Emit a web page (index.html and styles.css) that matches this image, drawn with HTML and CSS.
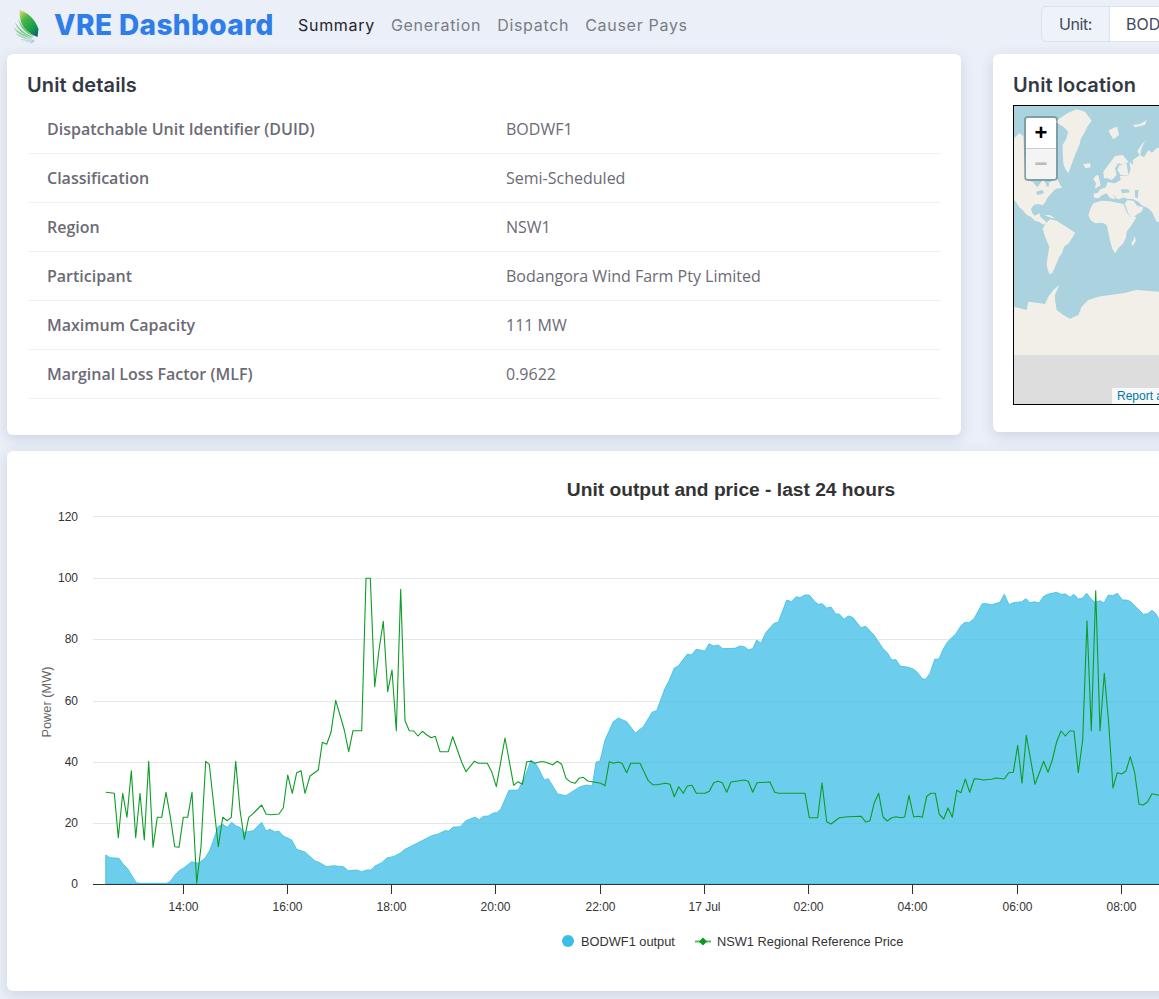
FILE: index.html
```html
<!DOCTYPE html>
<html lang="en">
<head>
<meta charset="utf-8">
<title>VRE Dashboard</title>
<link rel="stylesheet" href="styles.css">
</head>
<body>
<header class="topbar">
  <a class="brand" href="#">
    <svg class="logo" viewBox="12 8 30 36" width="30" height="36" aria-hidden="true">
      <defs>
        <linearGradient id="leaf" x1="0.1" y1="0" x2="0.8" y2="1">
          <stop offset="0" stop-color="#d6dc6c"/>
          <stop offset="0.3" stop-color="#4fb748"/>
          <stop offset="0.75" stop-color="#129a4c"/>
          <stop offset="1" stop-color="#14606f"/>
        </linearGradient>
      </defs>
      <path d="M20.500 9C28 11 36 18 39.500 28L38.500 36C31 33 24.500 28 22 21C21 17 20.500 12 20.500 9Z" fill="url(#leaf)"/>
      <path d="M19 17C21 23 27 30 36 35.500C27 33 21 27 19 17Z" fill="#6cc16a"/>
      <path d="M16 21.500C20 27 26 33 35 36.500C26 35.500 19 30 16 21.500Z" fill="#7fcb8a"/>
      <path d="M14.500 26.500C20 31 27 35 34.500 37C26 37 18 33 14.500 26.500Z" fill="#8dd0a0"/>
      <path d="M16.500 32C22 35 28 37 34 37.800C28 38.800 20 37 16.500 32Z" fill="#a6d8ba"/>
      <path d="M21.500 38C26 38.500 30 38.500 34 38.300C31 40.300 25 40.800 21.500 38Z" fill="#bcdcd2"/>
      <path d="M26 41.500C28 40.500 32 39 34.800 38.500C33 40.500 29 42 26 41.500Z" fill="#c3cfe0"/>
      <path d="M31 42.500C32 41 33.500 39.500 35.500 38.600C35.500 40.500 34 42 31 42.500Z" fill="#a9b9d4"/>
    </svg>
    <span class="brand-name">VRE Dashboard</span>
  </a>
  <nav class="nav">
    <a class="nav-link active" href="#">Summary</a>
    <a class="nav-link" href="#">Generation</a>
    <a class="nav-link" href="#">Dispatch</a>
    <a class="nav-link" href="#">Causer Pays</a>
  </nav>
  <div class="unit-group">
    <span class="unit-label">Unit:</span>
    <span class="unit-value">BODWF1</span>
  </div>
</header>

<main class="page">
  <div class="cards-row">
    <section class="card card-details">
      <h2 class="card-title">Unit details</h2>
      <table class="details">
        <tbody>
          <tr><th>Dispatchable Unit Identifier (DUID)</th><td>BODWF1</td></tr>
          <tr><th>Classification</th><td>Semi-Scheduled</td></tr>
          <tr><th>Region</th><td>NSW1</td></tr>
          <tr><th>Participant</th><td>Bodangora Wind Farm Pty Limited</td></tr>
          <tr><th>Maximum Capacity</th><td>111 MW</td></tr>
          <tr><th>Marginal Loss Factor (MLF)</th><td>0.9622</td></tr>
        </tbody>
      </table>
    </section>

    <section class="card card-map">
      <h2 class="card-title">Unit location</h2>
      <div class="map">
        <svg class="map-world" viewBox="42 18 1200 894" aria-hidden="true">
          <rect class="sea" x="0" y="0" width="1300" height="765"/>
          <g class="land">
            <path d="M42 115L58 100L70 108L76 240L98 245L112 262L128 240L140 252L150 246L172 236L180 254L187 263L168 266L158 276L142 294L136 306L128 316L114 312L102 315L93 325L97 340L105 347L118 340L122 352L130 358L141 368L130 374L118 366L105 362L92 350L80 345L68 330L58 322L50 308L42 300Z"/>
            <path d="M132 346L150 345L167 356L150 352Z"/>
            <path d="M190 48L205 38L230 28L255 35L275 62L262 80L255 95L243 115L238 135L225 165L214 195L205 220L195 205L190 190L188 160L188 135L198 118L205 95L190 80L165 65Z"/>
            <path d="M250 192L270 190L272 202L256 205Z"/>
            <path d="M325 92L338 85L352 80L357 105L340 118L332 105Z"/>
            <path d="M398 75L420 72L440 60L435 75L405 82Z"/>
            <path d="M412 152L428 130L445 116L432 128L424 148L420 168Z"/>
            <path d="M280 238L288 226L295 226L302 256L285 266L288 250Z"/>
            <path d="M312 235L310 215L325 195L345 168L368 165L385 185L372 195L355 190L345 205L350 225L335 240L322 235Z"/>
            <path d="M358 196L380 192L385 225L362 225L352 210Z"/>
            <path d="M282 293L281 281L293 279L301 268L318 262L322 247L345 250L362 240L360 228L385 226L392 208L388 186L400 194L398 180L420 165L432 172L445 150L456 158L470 145L492 140L1300 130L1300 365L470 365L456 336L444 325L425 316L415 305L400 298L380 296L372 292L358 298L350 296L340 283L346 298L330 294L320 280L306 285L296 295Z"/>
            <path d="M374 311L382 300L400 302L412 318L430 322L425 335L412 342L395 356L387 345Z"/>
            <path d="M128 386L138 370L150 358L170 362L185 372L205 385L225 398L218 412L206 430L192 440L186 460L178 470L170 490L158 518L148 523L142 505L140 490L148 440L135 410Z"/>
            <path d="M265 345L272 325L280 310L305 302L330 304L370 312L380 335L390 352L410 350L395 375L380 395L378 412L370 430L355 445L345 460L336 445L330 420L320 375L308 368L285 370L272 360Z"/>
            <path d="M394 432L405 408L407 424L398 438Z"/>
            <path d="M42 620L60 625L80 630L85 605L110 608L135 612L145 590L160 570L178 555L165 585L165 600L170 630L190 645L210 656L235 645L245 620L265 600L295 590L330 585L370 580L410 570L480 575L1300 575L1300 765L42 765Z"/>
          </g>
          <path class="sea" d="M405 270L416 270L413 296L405 290Z"/>
          <path class="sea" d="M362 268L385 268L390 277L366 280Z"/>
          <path class="sea" d="M138 250L146 248L148 258L140 260Z"/>
          <path class="sea" d="M108 275L128 270L132 280L112 285Z"/>
          <rect class="map-void" x="0" y="765" width="1300" height="160"/>
        </svg>
        <div class="zoom-control">
          <span class="zoom-btn zoom-in">+</span>
          <span class="zoom-btn zoom-out">−</span>
        </div>
        <a class="attribution" href="#">Report a map error</a>
      </div>
    </section>
  </div>

  <section class="card card-chart">
    <svg class="chart" viewBox="7 451 1486 540" role="img">
      <text class="chart-title" x="731" y="495.500">Unit output and price - last 24 hours</text>
      <g class="grid">
        <path d="M93 516.500H1493M93 578.500H1493M93 639.500H1493M93 701.500H1493M93 762.500H1493M93 823.500H1493"/>
      </g>
      <g class="ylabels">
        <text x="78" y="521">120</text>
        <text x="78" y="582">100</text>
        <text x="78" y="643">80</text>
        <text x="78" y="705">60</text>
        <text x="78" y="766">40</text>
        <text x="78" y="827">20</text>
        <text x="78" y="888">0</text>
      </g>
      <text class="ytitle" transform="translate(51 702) rotate(-90)">Power (MW)</text>
      <path class="area" d="M105.700 884L105.700 855L110 857.700L119 858.300L123.300 864.300L127.700 868.700L136.300 882.700L140 883.300L166.700 883.300L170 881.700L175 875L179 870.700L183.300 868.300L191.700 861.700L198.300 863.300L205 858.300L210 850L218 826.700L222.700 824.300L227.300 827.300L231.700 822.300L236 826L240 827.300L244.300 832.300L253.300 830.700L261.700 822.300L266 831L270 829.300L275 832L278.700 831L283.300 836L291.700 840L296.700 849.300L305 852L315 861L318.300 862L326.700 866.700L333.300 865.700L343.300 866.700L348.300 870.700L356.700 870L361.700 871.700L366.700 870L370.700 870L375 866L381.700 862.700L387.300 857.700L393.300 856.700L400 853.300L405 849.300L415 844.300L423.300 840L431.700 835.700L438.300 834L445 830.700L449 831L452.700 827.300L460 826.700L466 820.700L475 817L479.300 819.700L483.300 816.300L488.300 816L493.300 813L496.700 812.700L500.700 809.300L509 790.300L518.300 790L525 776.700L531 760L536.700 765L544.300 780L548.300 778.700L557.700 794L566 795.700L580 786.700L586.700 785L592.300 786L596 762.300L600 761L605 740L613.300 721.700L618.300 718L626.700 721.700L635.300 733L643.300 726.700L652.300 712L656.700 710.700L665 688.300L669 680.700L674.300 668L678.300 666L687.300 654L691.700 655L696 649.300L705 651L709 643.700L713.300 646L718.300 645L722.700 648.700L735 648.300L740 646L744.300 646.700L748.300 649.700L752.700 648.700L756.700 640L761 643.300L765.700 632.700L774 623.300L778.300 622.300L786.700 600L791.700 601.700L796 596.700L800 597.700L805 595L809.300 595L815 601.700L818.300 604.300L822.300 603.700L826.700 608L831 607L835.700 614L839.300 614L844 619.300L848.300 616L852.700 617.300L861 627.700L865.700 626.300L874 635L882.700 648.300L887.300 652.700L891.700 660L896 659.700L900 666L908.300 667.300L913.300 669L917.300 672.300L922.300 678.700L925.700 679.300L930 673.300L934.700 659.300L939 659L943.300 649L947.700 641.700L955.700 634L961 625.700L965 622.300L969 622.700L974 618.700L982.300 603.700L986.700 603.700L991.700 604.700L1000 602.300L1004.300 594.300L1009 604.700L1013.300 602.700L1021.700 601.700L1026 598.700L1030 602.700L1034.300 601.700L1039 603L1043.300 596.700L1047.700 594.300L1056.700 592.300L1061 594.300L1065.700 594L1070 597.300L1074 594.300L1078.300 599L1082.300 598.300L1086.700 593.300L1091 599L1095 602.300L1100 600.700L1104 603L1108.300 595L1112.700 595.700L1117.300 593.300L1122.300 600L1126.700 600L1130.700 601.700L1143.300 614.300L1147.700 613.700L1152 610.300L1156 614L1160 621L1160 884Z"/>
      <path class="price" d="M105.700 792.300L114.300 793.300L118.300 837.700L122.700 793.300L127 817.300L131.300 770.700L135.700 837.700L140 793.300L144.300 840L148.700 761.300L153 847.300L157.300 817.300L161.700 817.300L166 792.300L170.300 816.700L174.700 846.700L179 847.300L183.300 817.300L187.700 817.300L192 792.300L196.700 883.300L201 846.700L205.700 761.300L209.300 764.300L218.300 846.700L222.700 817.300L227.300 820.700L231.300 817.300L235.700 761.300L240 810L244.300 839.300L248.700 817.300L253.300 813.300L261.700 805L266 814L270.700 814.700L279 814L283.300 807.700L287.700 775L292.300 793.300L296.700 772.700L301 770.700L305 793.300L310 776L318.300 770L322.300 742.300L326.700 744.300L331 732.300L335.700 700.300L344.300 730L348.700 751.700L353 730.700L361.700 730.700L366 578.300L370.300 578.300L374.700 686.700L379 650L383.300 621.300L387.700 691.700L392 670L396.300 730.700L400.700 589.300L405 720.700L409.300 730.700L413.700 731L418 736L422.300 731.300L426.700 734.700L431 737.700L435.300 736.300L440 751.700L448.300 751.700L452.700 736.700L461.700 762.300L466 771.700L474.300 761.300L478.300 763.300L487.300 763.300L491.700 771.700L496.300 786.700L505 738L513.700 785.300L518 781.700L522.300 784.300L526.700 761.700L531 761.300L535.300 763.300L540 761.700L544 761.700L552.700 764.700L557.300 761.300L561.700 764.300L566 778.300L570 781.700L575 783.300L579 778.300L583.300 777.300L587.700 781L600.700 783.300L605 785.700L609.300 761.700L613.300 763.300L618 762L622 763.300L626.700 772.700L630.700 763.300L640 763.300L648.300 780.700L652.700 784.700L656.700 784.700L665.700 783.300L670 784.300L674.300 796.700L678.700 786.700L683.300 793.300L687.300 786L692 785.300L696.300 793.300L705 793.300L709.300 791.300L713.700 782.700L718 781.300L722.300 782.700L726.700 792.300L731 782L744 780L748.300 781.300L752.700 792.300L757 782.700L770 782L774.700 792.300L778.300 793.300L805 793.300L809.300 817.700L817.700 817.700L822 782.700L826.700 821.700L831 824L839.300 817.700L847.700 816.700L861.300 816.300L865.700 822L870 820.700L874.300 802.700L878.700 793.300L883 817L887.300 821L891.700 817.700L896 816.700L900.300 817.700L904.700 817L909 795.300L913.700 817L918 816.300L922.300 817.300L926.700 796.300L931 793.300L935.300 793.300L939.300 814.300L943.700 819L948 808L952.300 817.300L956.700 790.300L961 792.700L965.300 779L969.700 792.300L974.300 778.700L978.700 779L983 780L991.700 779.300L996 778L1004.300 779L1008.700 772.700L1013.300 772.300L1017.700 745.300L1022 783.300L1026.300 735.300L1035 784.300L1043.700 761.300L1048 772.300L1052.300 760L1056.700 741.700L1061 731L1065.300 736L1069.700 731L1074 731L1078.300 772.700L1082.700 740L1087 620.700L1091.300 730.700L1095.700 590.700L1100 730.700L1104.300 673.300L1108.700 723.300L1113 788L1117.300 772.700L1121.700 774L1126 771L1130.300 756.700L1134.700 772.700L1139 804.300L1143.300 805L1147.700 801.700L1152 793.700L1160 795.500"/>
      <g class="axis">
        <path d="M93 884.500H1493"/>
        <path d="M183.500 884V894M287.500 884V894M391.500 884V894M495.500 884V894M600.500 884V894M704.500 884V894M808.500 884V894M912.500 884V894M1017.500 884V894M1121.500 884V894"/>
      </g>
      <g class="xlabels">
        <text x="183.500" y="911">14:00</text>
        <text x="287.500" y="911">16:00</text>
        <text x="391.500" y="911">18:00</text>
        <text x="495.500" y="911">20:00</text>
        <text x="600.500" y="911">22:00</text>
        <text x="704.500" y="911">17 Jul</text>
        <text x="808.500" y="911">02:00</text>
        <text x="912.500" y="911">04:00</text>
        <text x="1017.500" y="911">06:00</text>
        <text x="1121.500" y="911">08:00</text>
      </g>
      <g class="legend">
        <circle class="legend-dot" cx="568" cy="941" r="6"/>
        <text x="581" y="945.500">BODWF1 output</text>
        <path class="legend-line" d="M695 941.500H711"/>
        <path class="legend-diamond" d="M703 937.500L707 941.500L703 945.500L699 941.500Z"/>
        <text x="717" y="945.500">NSW1 Regional Reference Price</text>
      </g>
    </svg>
  </section>
</main>
</body>
</html>
```
FILE: styles.css
```css
* {
  box-sizing: border-box;
}

html,
body {
  margin: 0;
  height: 999px;
  overflow: hidden;
}

body {
  width: 1520px;
  background: #eaeff8;
  font-family: "Open Sans", "Liberation Sans", sans-serif;
  color: #6c6a75;
}

.topbar {
  display: flex;
  align-items: center;
  height: 54px;
  padding: 0 0 6px 11px;
}

.brand {
  display: flex;
  align-items: center;
  gap: 13px;
  width: 287px;
  margin-top: 2px;
  text-decoration: none;
}

.logo {
  display: block;
  flex: none;
  margin-top: 3px;
}

.brand-name {
  font-family: Inter, "Liberation Sans", sans-serif;
  font-weight: 800;
  font-size: 28px;
  letter-spacing: 0.4px;
  color: #2e7de9;
  white-space: nowrap;
}

.nav {
  display: flex;
  gap: 16px;
  width: 743px;
  margin-top: 2px;
}

.nav-link {
  font-family: Inter, "Liberation Sans", sans-serif;
  font-size: 16px;
  letter-spacing: 0.7px;
  color: #7a7d84;
  text-decoration: none;
  white-space: nowrap;
}

.nav-link.active {
  color: #23252b;
}

.unit-group {
  display: flex;
  height: 36px;
  border: 1px solid #dde3ee;
  border-radius: 5px;
  font-family: Inter, "Liberation Sans", sans-serif;
  font-size: 16px;
  line-height: 34px;
  color: #434a5e;
}

.unit-label {
  width: 68px;
  padding-left: 17px;
  background: #eef2f9;
  border-right: 1px solid #dde3ee;
  border-radius: 5px 0 0 5px;
  letter-spacing: -0.4px;
}

.unit-value {
  width: 340px;
  padding-left: 16px;
  background: #fff;
  border-radius: 0 5px 5px 0;
}

.page {
  padding-left: 7px;
}

.cards-row {
  display: flex;
  align-items: flex-start;
  gap: 32px;
}

.card {
  background: #fff;
  border-radius: 6px;
  box-shadow: 0 4px 14px rgba(60, 75, 110, 0.16);
}

.card-title {
  margin: 0 0 8px;
  font-family: Inter, "Liberation Sans", sans-serif;
  font-size: 20px;
  font-weight: 600;
  line-height: 24px;
  letter-spacing: 0.1px;
  color: #343844;
}

.card-details {
  width: 954px;
  height: 381px;
  padding: 19px 20px 0 20px;
}

.details {
  width: 913px;
  margin-left: 1px;
  border-collapse: separate;
  border-spacing: 0;
  font-size: 16px;
}

.details tr {
  height: 49px;
}

.details th,
.details td {
  padding: 0;
  border-bottom: 1px solid #eff1f7;
}

.details th {
  width: 478px;
  padding-left: 19px;
  font-weight: 600;
  text-align: left;
}

.card-map {
  width: 500px;
  height: 378px;
  padding: 19px 20px 0;
}

.map {
  position: relative;
  width: 460px;
  height: 300px;
  border: 1px solid #000;
  overflow: hidden;
  background: #ddd;
}

.map-world {
  display: block;
  width: 400px;
  height: 298px;
}

.sea {
  fill: #aad3df;
}

.land {
  fill: #f2efe9;
}

.map-void {
  fill: #ddd;
}

.zoom-control {
  position: absolute;
  top: 10px;
  left: 10px;
  display: flex;
  flex-direction: column;
  width: 34px;
  border: 2px solid rgba(0, 0, 0, 0.25);
  border-radius: 4px;
  background-clip: padding-box;
}

.zoom-btn {
  display: block;
  height: 30px;
  font-family: "Liberation Sans", sans-serif;
  font-weight: 700;
  font-size: 22px;
  line-height: 30px;
  text-align: center;
}

.zoom-in {
  height: 31px;
  background: #fff;
  border-bottom: 1px solid #ccc;
  border-radius: 2px 2px 0 0;
  color: #000;
}

.zoom-out {
  background: #f4f4f4;
  border-radius: 0 0 2px 2px;
  color: #bbb;
}

.attribution {
  position: absolute;
  left: 98px;
  bottom: 0;
  padding: 0 5px;
  background: rgba(255, 255, 255, 0.8);
  font-family: "Liberation Sans", sans-serif;
  font-size: 12px;
  line-height: 16px;
  color: #0078a8;
  text-decoration: none;
  white-space: nowrap;
}

.card-chart {
  width: 1486px;
  height: 540px;
  margin-top: 16px;
}

.chart {
  display: block;
  width: 1486px;
  height: 540px;
  font-family: "Liberation Sans", Arial, sans-serif;
  font-size: 12px;
  fill: #333;
}

.chart-title {
  font-size: 19.2px;
  font-weight: 700;
  text-anchor: middle;
}

.grid path {
  fill: none;
  stroke: #e6e6e6;
  stroke-width: 1;
}

.ylabels text {
  text-anchor: end;
}

.ytitle {
  font-size: 12.8px;
  fill: #666;
  text-anchor: middle;
}

.area {
  fill: rgb(59, 190, 230);
  fill-opacity: 0.75;
  stroke: rgb(59, 190, 230);
  stroke-opacity: 0.8;
  stroke-width: 1;
}

.price {
  fill: none;
  stroke: #0d9d25;
  stroke-width: 1.1;
  stroke-linejoin: round;
}

.axis path {
  fill: none;
  stroke: #333;
  stroke-width: 1;
}

.xlabels text {
  text-anchor: middle;
}

.legend {
  font-size: 12.8px;
}

.legend-dot {
  fill: #3bbee6;
}

.legend-line {
  fill: none;
  stroke: #4ec26a;
  stroke-width: 2;
}

.legend-diamond {
  fill: #0a9a1c;
}
```
